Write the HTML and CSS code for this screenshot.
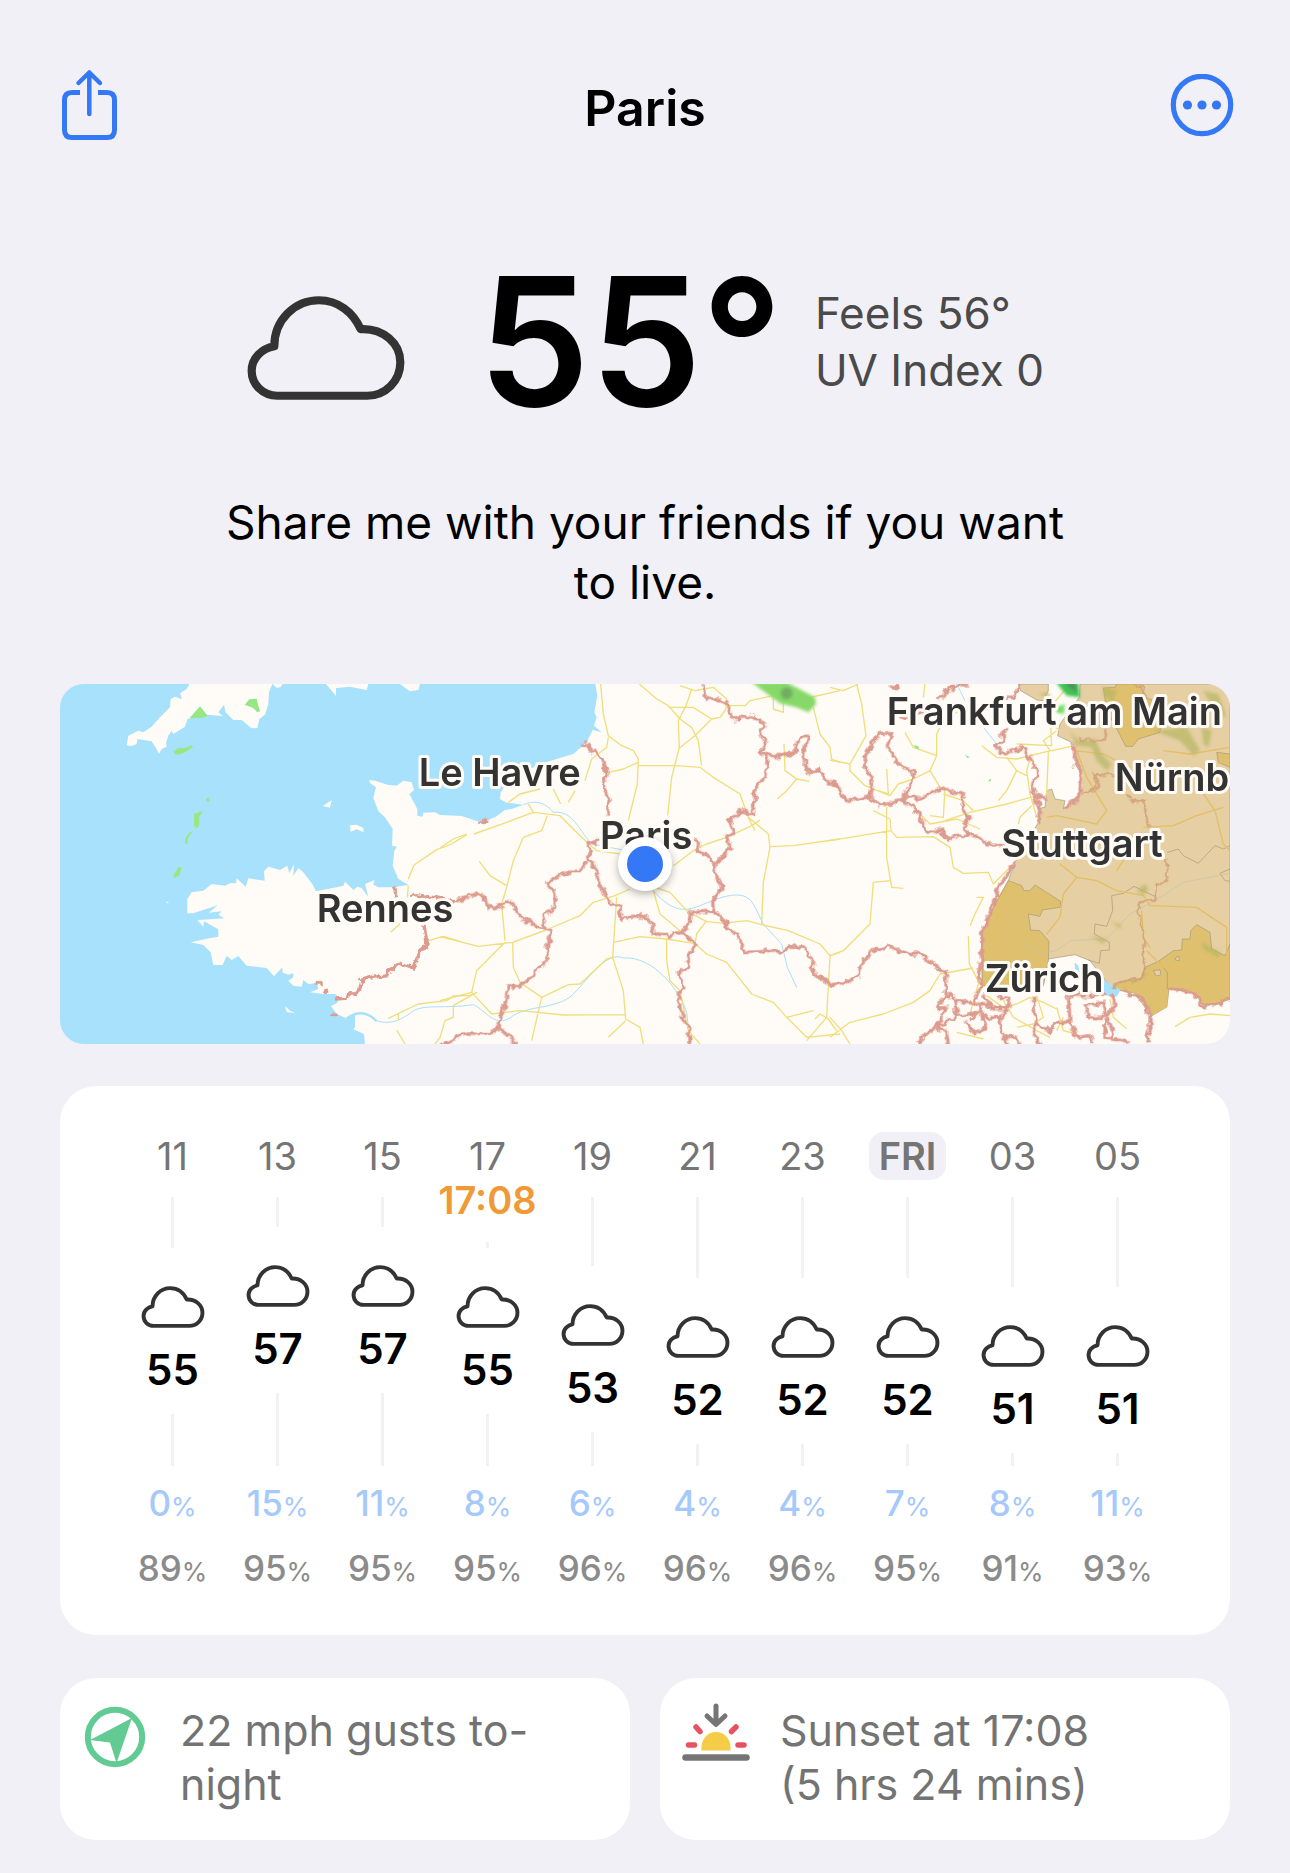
FILE: index.html
```
<!DOCTYPE html>
<html lang="en">
<head>
    <meta charset="UTF-8">
    <meta name="viewport" content="width=device-width, initial-scale=1.0">
    <title>Paris</title>
    <link rel="stylesheet" href="styles.css">
</head>
<body>
    <svg class="defs" aria-hidden="true">
        <symbol id="cloud" viewBox="43 42 485 323">
            <path d="M137 349C93 349 59 315 59 273C59 234 90 205 128 198C128 118 190 58 264 58C322 58 368 94 391 146C460 142 512 190 512 247C512 305 466 349 411 349Z" fill="none" stroke="#333" stroke-linejoin="round"/>
        </symbol>
    </svg>

    <div class="page">
        <header class="topbar">
            <button class="icon-btn" aria-label="Share">
                <svg width="64" height="74" viewBox="-4 0 64 74" fill="none" stroke="#3478f6" stroke-width="5">
                    <path d="M20 23.500H12Q4.500 23.500 4.500 31V61Q4.500 68.500 12 68.500H47Q54.500 68.500 54.500 61V31Q54.500 23.500 47 23.500H38"/>
                    <path d="M29.300 45V4M18.500 14L29.300 3.500L40 14" stroke-width="4.500" stroke-linecap="round" stroke-linejoin="round"/>
                </svg>
            </button>
            <h1>Paris</h1>
            <button class="icon-btn" aria-label="More">
                <svg width="64" height="64" viewBox="0 1 64 64">
                    <circle cx="32" cy="32" r="28.700" fill="none" stroke="#3478f6" stroke-width="5.200"/>
                    <g fill="#3478f6"><circle cx="17.500" cy="32" r="4.600"/><circle cx="32" cy="32" r="4.600"/><circle cx="46.500" cy="32" r="4.600"/></g>
                </svg>
            </button>
        </header>

        <section class="current">
            <svg class="current-icon"><use href="#cloud"/></svg>
            <div class="current-temp">55°</div>
            <div class="current-info">
                <div>Feels 56°</div>
                <div>UV Index 0</div>
            </div>
        </section>

        <p class="message">Share me with your friends if you want to live.</p>

        <section class="map">
            <svg viewBox="0 0 3510 1080" preserveAspectRatio="xMidYMid slice">
                <defs>
                    <filter id="rough" x="0" y="0" width="3510" height="1080" filterUnits="userSpaceOnUse">
                        <feTurbulence type="fractalNoise" baseFrequency="0.045" numOctaves="2" seed="4"/>
                        <feDisplacementMap in="SourceGraphic" scale="26" xChannelSelector="R" yChannelSelector="G"/>
                    </filter>
                    <filter id="soft"><feGaussianBlur stdDeviation="4"/></filter>
                </defs>
                <rect width="3510" height="1080" fill="#a8e1fb"/>

                <!-- land -->
                <g fill="#fffbf6">
                    <path d="M388 0L380 15L360 28L366 46L345 38L332 45L330 70L300 100L275 128L250 145L235 140L205 155L200 184L215 186L230 180L232 165L275 172L290 195L297 210L305 195L320 188L318 176L325 155L335 140L340 150L375 128L382 105L440 92L488 96L475 85L492 62L497 85L520 108L545 108L575 133L592 132L598 105L615 92L625 60L627 25L637 0Z"/>
                    <path d="M638 0L650 12L662 9L668 0ZM798 0L828 36L828 12L870 8L920 18L925 0ZM1020 0L1050 22L1075 18L1080 0Z"/>
                    <path d="M788 366L815 349L810 371ZM870 424L890 422L910 432L911 445L890 436L872 443ZM675 966L690 980L707 988L680 984ZM316 655l8-2 2 5z"/>
                    <path d="M1606 0L1612 35L1603 85L1610 100L1602 125L1625 145L1598 138L1580 175L1540 210L1440 240L1400 262L1340 300L1322 325L1320 345L1340 356L1390 362L1355 375L1335 378L1305 400L1260 415L1230 404L1205 396L1140 393L1125 385L1090 386L1087 398L1072 395L1072 375L1048 330L1062 318L1055 295L1030 290L1010 305L985 303L945 290L928 288L930 297L948 310L940 342L955 382L975 400L998 435L996 485L1011 488L1003 500L998 545L1015 585L1045 603L1000 610L955 610L940 602L944 588L915 600L925 640L905 612L892 608L880 618L855 593L850 605L830 610L768 622L757 600L730 565L715 552L700 575L702 540L688 568L682 545L660 558L625 548L612 562L614 590L565 583L557 608L530 583L528 598L510 598L495 605L455 600L430 620L395 625L382 645L382 688L400 688L473 664L446 686L485 682L475 692L492 703L450 706L412 708L430 728L432 712L475 736L475 758L452 762L392 775L430 783L452 805L460 843L488 843L500 815L515 828L535 816L560 845L620 852L642 877L667 850L668 866L685 872L700 868L700 880L685 890L700 905L725 908L730 888L745 900L770 898L775 915L750 925L790 930L825 930L840 943L830 958L813 966L830 990L860 1003L885 988L885 1030L880 1036L912 1050L915 1080H3510V0Z"/>
                </g>

                <!-- warning areas -->
                <g transform="translate(2310)" stroke="#a59877" stroke-width="2">
                    <path fill="#e6cfa2" d="M565 0L572 20L620 48L640 50L655 20L655 0ZM750 0L748 40L690 120L683 155L730 178L740 245L752 270L745 345L700 375L705 350L675 345L665 315L650 320L645 370L632 372L625 415L555 535L535 590L490 670L455 750L457 905L640 905L655 825L735 812L780 830L845 915L910 925L965 997L1200 945V0Z"/>
                    <g fill="#dfc06e">
                        <path d="M535 590L575 605L582 620L600 620L615 603L692 652L690 670L637 678L630 697L595 690L602 738L630 740L657 772L655 830L640 905L457 905L455 750L490 670Z"/>
                        <path d="M845 915L870 892L935 885L945 850L985 832L1030 800L1055 798L1057 765L1080 765L1082 740L1100 722L1140 745L1145 795L1185 815L1200 780V945L1160 962L1115 960L1095 928L1018 915L1012 970L965 997L940 940L900 925Z"/>
                        <path d="M820 12L855 10L860 0H930L945 40L1000 60L990 145L925 165L908 187L887 187L858 130L830 80ZM1160 205L1200 210V250L1165 235Z"/>
                    </g>
                    <path fill="#fffbf6" d="M965 997L1012 970L1018 917L1095 928L1115 962L1160 964L1200 947V1080H820L845 920L910 928Z" stroke="none"/>
                    <path fill="#e6cfa2" d="M970 860l20-3 3 15-14 4zM1038 820l8-4 2 14-12-2z"/>
                    <path fill="none" d="M1012 505L1045 495L1060 515L1105 538L1155 485L1180 495L1200 485M980 640L912 607L880 628L845 635L848 680L830 727L795 720L793 750L838 775L838 798L812 800L808 838L775 828M1200 555L1170 568L1185 590L1200 592M985 832L1012 865V915"/>
                    <path fill="none" stroke="#bfc6b1" d="M580 778L630 808L680 800L720 770L830 765L900 690L1000 635L1060 595L1200 568"/>
                </g>

                <!-- rivers and lakes -->
                <g fill="none" stroke="#a8e1fb" stroke-width="3">
                    <path stroke-width="7" d="M860 1003C900 975 930 990 950 1012"/>
                    <path d="M945 1008C1000 1030 1040 995 1060 980C1100 960 1150 975 1240 962C1280 980 1300 1030 1350 1002C1400 960 1490 980 1540 930C1590 880 1640 800 1690 822C1780 815 1860 920 1880 985L1885 1030"/>
                    <path d="M1390 362C1430 345 1460 360 1480 385C1540 380 1550 430 1595 480L1700 500M1780 620C1840 690 1880 680 1920 665C1980 640 2050 610 2080 660L2110 720L2165 780L2182 850L2210 910M2690 0L2715 50M2770 130L2830 205M2930 320L2935 390M2870 540L2835 590"/>
                    <path fill="#a8e1fb" d="M3130 890l50 28-10 18-38-4zM3045 838l8 6 4 20-10-8z"/>
                </g>

                <!-- roads -->
                <g fill="none" stroke="#f0de7c" stroke-width="4" stroke-linejoin="round">
                    <path d="M1045 585L1062 543L1130 497L1175 480L1220 452M1045 605L1042 640M992 745L1025 715M1105 770L1150 757L1200 772M985 1003L1075 960L1160 950L1180 936L1230 934L1250 925L1180 965L1180 1000L1155 1010L1140 1060L1125 1080M1010 1038L1035 1080M1015 990V1008"/>
                    <g transform="translate(1140)">
                        <path d="M482 0L490 90L505 155L545 185L580 200L595 225L592 300L565 410M505 160L500 190L455 225L435 290M505 265L550 255L595 235M595 245L705 245L780 250L820 280L900 330L925 400L985 450L990 490L970 595L965 720M598 0L650 45L685 65L720 105L755 130L775 170L785 245M755 15L738 65L715 110L718 190L695 280L683 395M685 70L760 70L815 105L840 100L858 75L860 45L820 10L765 20L720 5M815 105L765 155L718 192M860 65L915 65L930 50L1000 35L1090 45L1200 20M1000 35L1000 75L1030 85L1030 55M1120 70L1140 150L1170 190L1175 225L1200 235M1032 180L1035 260L1070 285L1040 320L1012 345M1070 285L1108 292"/>
                        <path d="M0 492L40 465L80 450M102 450L200 415L280 385L360 395L420 455L470 500L540 510M205 355L240 330L300 315M322 395L305 440L250 460L220 530L200 610L185 660L195 770M118 532L150 575L200 605M265 360L280 385M340 315L362 360M405 320L385 355M700 545L760 500L800 480L860 460L935 425L960 408M925 400L945 440M990 488L1060 485L1200 465M570 615L525 635L460 655L420 695L318 738L218 775L115 787L0 758M530 640L518 820L550 920L557 1005L600 1030L610 1080M557 1010L505 1060M640 620L660 690L720 740L760 775L800 810L860 835L935 930L1000 955L1040 1000L1100 1060L1200 1050M520 775L600 758L680 765L760 778M680 765L680 830L690 890L720 920L745 1040L780 1080M765 780L770 750L798 712L740 680L690 625L650 612M798 712L850 718L920 710L965 722L1045 740L1140 780L1170 815L1160 1000L1100 1070M1170 815L1200 805M1040 1000L1120 980M1125 1005L1140 990L1165 1005L1190 1040M195 775L110 860L95 925L155 990L240 980L370 993L555 992M95 925L0 950M218 775L220 850L240 895L305 940L275 1070M305 940L385 902L420 900L500 825L520 820"/>
                    </g>
                    <g transform="translate(2310)">
                        <path d="M80 0L95 60L108 155L60 240L60 260L105 305L180 335L205 300L250 285L300 260L320 215L320 150L345 100L420 70M0 228L60 240M0 10L40 20L85 0M285 0L280 40M225 145L250 190L320 215M300 260L330 310M170 255L175 330L145 320M130 380L180 405L183 440L0 470M183 440L200 460L310 458L360 490L370 550L400 568L475 565L490 600L550 540M170 370L170 520L185 610L220 613M180 590L130 595L120 720L40 800L0 815M345 315L340 400L300 395M250 370L300 420L380 405L450 435M345 410L420 385L530 360L620 335M340 330L400 350L430 380M455 185L500 220L560 225L640 205L735 185M560 180L665 185L660 70L720 0M530 220L560 260L530 320L505 350M600 225L590 260L600 330L620 400M655 205L650 330L640 345M565 420L570 400L605 365M560 260L590 275M680 140L640 170L660 200M640 100L690 140"/>
                        <path d="M440 640L460 640L435 690L420 725M415 755L418 840L455 910M430 852L330 870L300 920L250 955L160 990L60 1015L0 1060M0 1000L35 1040L60 1080M450 880L420 990M470 935L520 970L560 960L600 940L640 955L680 975M515 940L550 1000L620 1040L660 1060M620 935L640 1000L610 1020L560 1030M680 970L700 1040L740 1050M840 945L850 1000L890 1035M1035 1028L1080 1000L1140 990L1200 995M380 1045L460 1065M700 1000L680 1040"/>
                        <path stroke="#e2bf66" d="M735 200L820 210L900 250M740 200L770 280L830 380L800 420L680 395L650 400M690 540L740 580L800 590L860 620L940 635L960 665L1100 670L1190 730M740 580L700 630L690 700L650 750M535 600L500 700L490 790L460 810M940 430L1030 425L1100 395L1180 370M1100 300L1155 380L1180 480L1200 500M1000 200L1080 210L1200 190M860 560L900 500L940 460M960 790L940 760L935 680M950 800L1000 850L1060 860M1190 730L1190 810"/>
                    </g>
                </g>

                <!-- rain -->
                <g fill="#98e787">
                    <path d="M388 103L420 67L443 95L430 101ZM554 62L568 46L590 44L594 62L600 82L592 85L580 72ZM340 203L355 192L375 192L395 184L399 190L365 210L347 212ZM438 345l6-5 5 8-3 7-7-4zM402 390L430 380L418 398L417 425L410 432L402 425ZM400 441L385 460L382 480L374 478L378 458L392 443ZM355 550L364 550L360 572L345 582L340 575Z"/>
                    <path d="M2560 184l14 2 4 9-10-1zM2714 212l16 8-8 2zM2786 288l8-4-2 8-6 1z"/>
                </g>
                <g filter="url(#soft)">
                    <path fill="#86d968" d="M2075 -5H2180L2265 40L2268 60L2245 85L2210 70L2160 58Z"/>
                    <circle cx="2180" cy="28" r="18" fill="#6fae62"/>
                    <path fill="#3fc152" d="M2988 -5H3055L3060 40L3020 35Z"/>
                    <path fill="#4b8f59" d="M3010 -5H3045L3050 25Z"/>
                    <path fill="#6ede61" d="M2985 70l30-10-4 30-20-4z"/>
                    <path fill="#b5b763" d="M3030 140L3055 170L3105 165L3125 210L3155 240L3140 260L3110 230L3095 190L3050 185ZM3280 140L3380 130L3420 200L3400 215L3360 170ZM3430 20L3475 30L3500 100L3470 90ZM3425 130l30 10-10 50-15-10zM2935 30l30-5 10 18zM3130 10l40 10-10 35-30-20zM3230 620l25-20 10 15-15 20zM3155 715l25 5 5 15zM3090 755l50 10-10 15zM3425 775L3480 805L3475 820L3430 795Z" opacity=".7"/>
                </g>

                <!-- region borders -->
                <g fill="none" stroke="#dc9b8e" stroke-width="10" stroke-linejoin="round" filter="url(#rough)">
                    <path d="M828 945L855 943L858 932L885 933L897 920L902 890L940 877L980 872L1020 838L1060 852L1080 798L1103 790L1092 725M1000 605L1012 640M1050 640L1065 632L1130 642L1190 655M770 898L782 902M785 930L806 915M816 990L826 992M1255 415L1285 410"/>
                    <g transform="translate(1140)">
                        <path d="M430 178L490 230L502 270L490 300L505 355L500 395M475 470L445 482L450 520L430 545L420 565L380 565L320 595L345 630L345 665L312 695L318 738L330 745L322 820L300 850L270 885L235 908L205 905L195 960L175 1025L155 1052L80 1050L50 1060L30 1080H0M175 1030L220 1065V1080M50 650L118 628L155 675L215 652L240 700L318 738M450 520L470 570L480 610L510 655L540 665L545 705L610 695L635 720L640 750L680 752L725 742L765 780L745 820L745 850L712 865L735 910L715 930L722 985L745 1030L752 1080"/>
                        <path d="M725 742L748 720L750 687L820 680L818 650L845 608L822 560L830 540L870 490L860 460L885 450L868 405L905 380L940 388L945 315L978 275L982 215L962 210L978 180L960 150L975 120L935 95L878 105L865 60L820 42L800 45L788 0M830 545L775 495L770 470L755 465M982 212L1020 218L1068 200L1068 180L1095 152L1107 160L1088 208L1102 262L1140 262L1160 290L1195 310M820 680L858 710L858 735L890 750L915 805L1035 800L1045 785L1090 790L1120 840L1122 875L1150 885L1180 908"/>
                    </g>
                    <g transform="translate(2310)">
                        <path d="M0 292L20 300L48 350L120 335L148 365L215 350L255 370L295 450L330 435L355 465L415 450L400 430L420 400L395 375L400 335L340 312L265 343L220 335L250 285L250 262L210 248L172 185L185 145L145 150L110 205L100 240L130 300L120 335M220 335V352M415 450L440 450L470 482L520 485M180 5L205 15L195 0M320 45L360 15L410 0M210 100L280 85M565 0L555 40L530 40M535 135L515 150L520 170L495 185L520 210L580 190L605 230L625 270L608 295L612 330L645 345M612 330L630 370L625 415M730 180L740 245L752 270L745 345L700 372"/>
                        <path d="M555 535L530 575L505 610L485 670L455 750L455 820L445 875L457 910L435 940L440 960L375 950L370 935L345 935L350 870L270 808L240 812L175 787L120 805L90 850L85 880L0 908M345 935L320 975L350 970L320 1025L260 1080M375 950L380 995L450 985L420 1010M380 995L320 1030L350 1045L355 1080M460 935L490 975L530 975L540 945L505 935M410 1015L430 1050L470 1030L455 995L510 1005L515 1060L540 1080M455 995L450 960L480 965M530 975L510 1005M610 935L615 1000L610 1050L635 1080M515 1060L560 1060L570 1080M615 1015L660 1045L675 1015L720 1010L715 935L830 930M720 1010L740 1060L780 1055L790 1080M770 965L820 955L830 990L800 1005L775 1000ZM845 930L855 960L825 1010L825 1060L900 1075M830 1000L850 1040L840 1060M880 920L940 950L960 995L960 1040L950 1080M1015 915L1090 925L1115 965L1160 962L1200 945"/>
                        <path stroke="#d3a077" stroke-width="6" d="M750 165L825 170L830 135M755 330L808 310L795 270L860 275M890 330L910 355L940 345L950 400L955 430M1008 525L1012 590L980 600L975 645L930 655L922 680L940 740L945 850L940 880L870 895L845 915M905 0L940 10L945 40"/>
                    </g>
                </g>

                <g class="map-labels">
                    <text x="2480" y="123">Frankfurt am Main</text>
                    <text x="1076" y="307">Le Havre</text>
                    <text x="3164" y="320">Nürnb</text>
                    <text x="1620" y="495">Paris</text>
                    <text x="2824" y="518">Stuttgart</text>
                    <text x="770" y="713">Rennes</text>
                    <text x="2774" y="924">Zürich</text>
                </g>
            </svg>
            <span class="map-pin"></span>
        </section>

        <section class="card hourly">
            <div class="hour">
                <div class="time">11</div>
                <div class="track"><i class="line" style="height: 51px"></i><svg class="hour-icon"><use href="#cloud"/></svg><b class="temp">55</b><i class="line rest"></i></div>
                <div class="rain">0<small>%</small></div>
                <div class="humidity">89<small>%</small></div>
            </div>
            <div class="hour">
                <div class="time">13</div>
                <div class="track"><i class="line" style="height: 30px"></i><svg class="hour-icon"><use href="#cloud"/></svg><b class="temp">57</b><i class="line rest"></i></div>
                <div class="rain">15<small>%</small></div>
                <div class="humidity">95<small>%</small></div>
            </div>
            <div class="hour">
                <div class="time">15</div>
                <div class="track"><i class="line" style="height: 30px"></i><svg class="hour-icon"><use href="#cloud"/></svg><b class="temp">57</b><i class="line rest"></i></div>
                <div class="rain">11<small>%</small></div>
                <div class="humidity">95<small>%</small></div>
            </div>
            <div class="hour">
                <div class="time">17</div>
                <div class="track"><i class="line" style="height: 51px"></i><span class="sunset">17:08</span><svg class="hour-icon"><use href="#cloud"/></svg><b class="temp">55</b><i class="line rest"></i></div>
                <div class="rain">8<small>%</small></div>
                <div class="humidity">95<small>%</small></div>
            </div>
            <div class="hour">
                <div class="time">19</div>
                <div class="track"><i class="line" style="height: 69px"></i><svg class="hour-icon"><use href="#cloud"/></svg><b class="temp">53</b><i class="line rest"></i></div>
                <div class="rain">6<small>%</small></div>
                <div class="humidity">96<small>%</small></div>
            </div>
            <div class="hour">
                <div class="time">21</div>
                <div class="track"><i class="line" style="height: 81px"></i><svg class="hour-icon"><use href="#cloud"/></svg><b class="temp">52</b><i class="line rest"></i></div>
                <div class="rain">4<small>%</small></div>
                <div class="humidity">96<small>%</small></div>
            </div>
            <div class="hour">
                <div class="time">23</div>
                <div class="track"><i class="line" style="height: 81px"></i><svg class="hour-icon"><use href="#cloud"/></svg><b class="temp">52</b><i class="line rest"></i></div>
                <div class="rain">4<small>%</small></div>
                <div class="humidity">96<small>%</small></div>
            </div>
            <div class="hour">
                <div class="time day">FRI</div>
                <div class="track"><i class="line" style="height: 81px"></i><svg class="hour-icon"><use href="#cloud"/></svg><b class="temp">52</b><i class="line rest"></i></div>
                <div class="rain">7<small>%</small></div>
                <div class="humidity">95<small>%</small></div>
            </div>
            <div class="hour">
                <div class="time">03</div>
                <div class="track"><i class="line" style="height: 90px"></i><svg class="hour-icon"><use href="#cloud"/></svg><b class="temp">51</b><i class="line rest"></i></div>
                <div class="rain">8<small>%</small></div>
                <div class="humidity">91<small>%</small></div>
            </div>
            <div class="hour">
                <div class="time">05</div>
                <div class="track"><i class="line" style="height: 90px"></i><svg class="hour-icon"><use href="#cloud"/></svg><b class="temp">51</b><i class="line rest"></i></div>
                <div class="rain">11<small>%</small></div>
                <div class="humidity">93<small>%</small></div>
            </div>
        </section>

        <section class="facts">
            <div class="card fact">
                <svg width="72" height="72" viewBox="1 2 72 72">
                    <circle cx="36" cy="36" r="27.200" fill="none" stroke="#62cb93" stroke-width="6"/>
                    <path d="M53 17L11 39L31 41.500L37.500 62Z" fill="#62cb93"/>
                </svg>
                <div>22 mph gusts to-<br>night</div>
            </div>
            <div class="card fact">
                <svg width="72" height="72" viewBox="0 3 72 72" fill="none" stroke-linecap="round" stroke-linejoin="round">
                    <path d="M36 6V23M27 16L36 24.500L45 16" stroke="#757575" stroke-width="5"/>
                    <path d="M21.500 50.500V47A14.500 15 0 0 1 50.500 47V50.500Z" fill="#f5cc46"/>
                    <path d="M16 27L20 31.500M56 27L51.500 31.500M8.500 45H14.500M58 45H64" stroke="#e8515f" stroke-width="5.500"/>
                    <path d="M5.500 57.500H66.500" stroke="#757575" stroke-width="6.500"/>
                </svg>
                <div>Sunset at 17:08<br>(5 hrs 24 mins)</div>
            </div>
        </section>
    </div>
</body>
</html>
```

FILE: styles.css
```
* {
    box-sizing: border-box;
}
body {
    margin: 0;
    background-color: #f1f0f6;
    color: #000;
    font-family: Inter, "Liberation Sans", sans-serif;
}
.defs {
    position: absolute;
    width: 0;
    height: 0;
}
.page {
    padding: 60px 60px 33px;
}
.topbar {
    display: flex;
    justify-content: space-between;
    align-items: center;
    height: 92px;
    margin: 0 -4px;
}
.topbar h1 {
    margin: 0;
    padding-top: 4px;
    font-size: 50px;
    line-height: 60px;
    font-weight: 600;
}
.icon-btn {
    display: flex;
    padding: 0;
    border: none;
    background: none;
    cursor: pointer;
}

/* current conditions */
.current {
    display: flex;
    justify-content: center;
    align-items: center;
    height: 220px;
    margin-top: 80px;
}
.current-icon {
    width: 160px;
    height: 106px;
    margin: 12px 72px 0 0;
    stroke-width: 25;
}
.current-temp {
    margin-right: 32px;
    font-size: 178px;
    line-height: 220px;
    font-weight: 600;
}
.current-info {
    color: #4a4a4a;
    font-size: 44px;
    line-height: 57px;
}
.message {
    max-width: 860px;
    margin: 40px auto 72px;
    font-size: 46px;
    line-height: 60px;
    text-align: center;
}

/* map */
.map {
    position: relative;
    overflow: hidden;
    aspect-ratio: 1170 / 360;
    border-radius: 24px;
}
.map svg {
    display: block;
    width: 100%;
    height: 100%;
}
.map-labels text {
    fill: #333;
    stroke: #fffbf6;
    stroke-width: 18px;
    stroke-linejoin: round;
    paint-order: stroke;
    font-size: 114px;
    font-weight: 600;
}
.map-pin {
    position: absolute;
    top: 50%;
    left: 50%;
    width: 54px;
    height: 54px;
    margin: -27px;
    border: 9px solid #fff;
    border-radius: 50%;
    background-color: #3478f6;
    box-shadow: 0 3px 9px rgba(0, 0, 0, 0.3);
}

.card {
    border-radius: 36px;
    background-color: #fff;
}

/* hourly forecast */
.hourly {
    display: grid;
    grid-template-columns: repeat(10, 1fr);
    margin-top: 42px;
    padding: 46px 60px 47px;
}
.hour {
    display: flex;
    flex-direction: column;
    align-items: center;
}
.time {
    margin-bottom: 17px;
    color: #757575;
    font-size: 38px;
    line-height: 48px;
}
.day {
    padding: 0 10px;
    border-radius: 15px;
    background-color: #f1f0f6;
    font-weight: 600;
}
.track {
    position: relative;
    display: flex;
    flex-direction: column;
    align-items: center;
    height: 269px;
    margin-bottom: 17px;
}
.line {
    width: 3px;
    background-color: #f2f2f2;
}
.rest {
    flex: 1;
}
.hour-icon {
    width: 64px;
    height: 42px;
    margin: 38px 0 18px;
    stroke-width: 30;
}
.temp {
    margin-bottom: 20px;
    font-size: 42px;
    line-height: 48px;
    font-weight: 600;
}
.sunset {
    position: absolute;
    top: -17px;
    padding-bottom: 22px;
    background-color: #fff;
    color: #f09a37;
    font-size: 38px;
    line-height: 40px;
    font-weight: 600;
}
.rain, .humidity {
    font-size: 35px;
    line-height: 40px;
    font-weight: 500;
}
.rain {
    margin-bottom: 25px;
    color: #a5c9fb;
}
.humidity {
    color: #8b8b8b;
}
small {
    font-size: 26px;
    line-height: 1;
    font-weight: 400;
}

/* facts */
.facts {
    display: grid;
    grid-template-columns: 1fr 1fr;
    gap: 30px;
    margin-top: 43px;
}
.fact {
    display: flex;
    gap: 28px;
    padding: 25px 20px 29px;
    color: #737373;
    font-size: 43px;
    line-height: 54px;
}
.fact svg {
    flex: none;
}
```
